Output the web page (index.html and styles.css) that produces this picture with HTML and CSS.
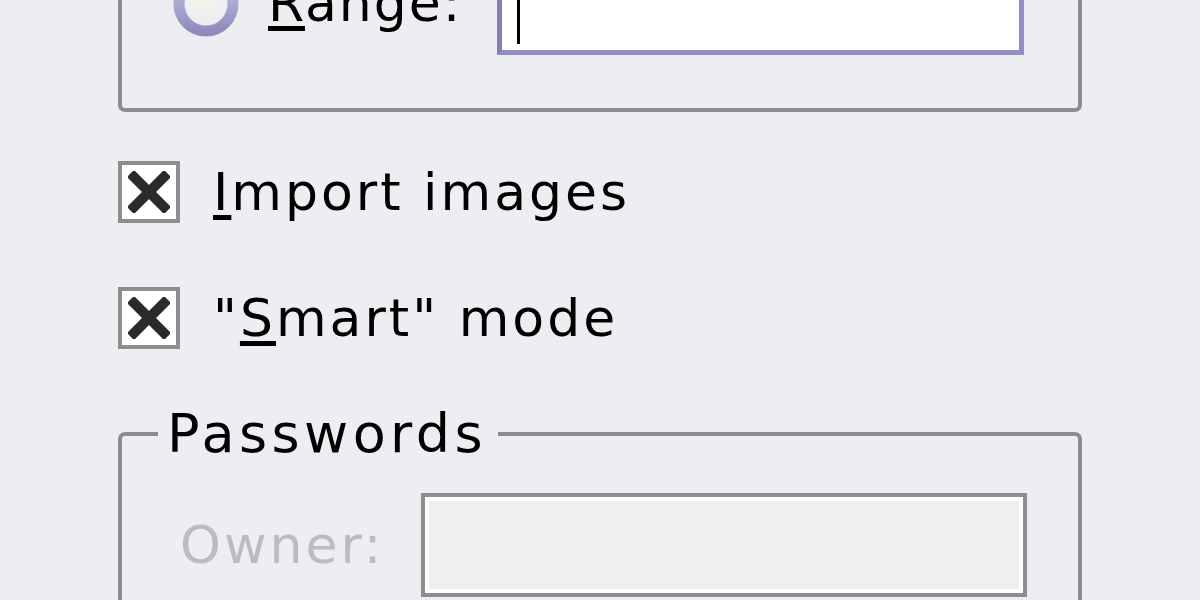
FILE: index.html
```html
<!DOCTYPE html>
<html>
<head>
<meta charset="utf-8">
<link rel="stylesheet" href="styles.css">
</head>
<body>
<div class="page">
  <div class="frame top-frame">
    <div class="range-row">
      <span class="radio">
        <svg width="66" height="66" viewBox="0 0 66 66">
          <defs>
            <linearGradient id="rg" x1="0" y1="0" x2="0" y2="1">
              <stop offset="0" stop-color="#c9c7e4"/>
              <stop offset="1" stop-color="#8f8bbd"/>
            </linearGradient>
            <radialGradient id="rf" cx="0.45" cy="0.35" r="0.6">
              <stop offset="0" stop-color="#f3f8e6"/>
              <stop offset="1" stop-color="#eceaf6"/>
            </radialGradient>
          </defs>
          <circle cx="33" cy="33" r="27" fill="url(#rf)" stroke="url(#rg)" stroke-width="11"/>
        </svg>
      </span>
      <span class="label"><u>R</u>ange:</span>
      <div class="entry focused"><span class="cursor"></span></div>
    </div>
  </div>

  <div class="check-row first">
    <span class="checkbox">
      <svg width="42" height="42" viewBox="0 0 42 42">
        <path d="M6 6 L36 36 M36 6 L6 36" stroke="#2a2a2a" stroke-width="10" stroke-linecap="square"/>
      </svg>
    </span>
    <span class="label"><u>I</u>mport images</span>
  </div>

  <div class="check-row">
    <span class="checkbox">
      <svg width="42" height="42" viewBox="0 0 42 42">
        <path d="M6 6 L36 36 M36 6 L6 36" stroke="#2a2a2a" stroke-width="10" stroke-linecap="square"/>
      </svg>
    </span>
    <span class="label">"<u>S</u>mart" mode</span>
  </div>

  <fieldset class="frame pw">
    <legend class="label">Passwords</legend>
    <div class="owner-row">
      <span class="label disabled">Owner:</span>
      <div class="entry disabled"></div>
    </div>
  </fieldset>
</div>
</body>
</html>
```

FILE: styles.css
```css
html, body {
  margin: 0;
  padding: 0;
  background: #edeef2;
  overflow: hidden;
  height: 600px;
}

.page {
  width: 964px;
  margin-left: 118px;
  font-family: "DejaVu Sans", "Liberation Sans", sans-serif;
  font-size: 52px;
  color: #000;
}

.label {
  white-space: nowrap;
  line-height: normal;
  letter-spacing: 3px;
}

.label u {
  text-decoration-thickness: 5px;
  text-underline-offset: 5px;
}

.frame {
  border: 4px solid #8c8c8e;
  border-radius: 7px;
  box-sizing: border-box;
}

.top-frame {
  margin-top: -118px;
  padding: 65px 54px 53px 51px;
}

.range-row {
  display: flex;
  align-items: center;
  height: 104px;
}

.radio {
  display: flex;
  width: 66px;
  height: 66px;
  margin-top: 2px;
}

.range-row .label {
  margin-left: 29px;
  letter-spacing: 2px;
}

.entry {
  box-sizing: border-box;
  height: 104px;
  margin-left: auto;
  position: relative;
}

.entry.focused {
  width: 527px;
  border: 5px solid #928ec3;
  border-left-color: #837fb5;
  border-top-color: #837fb5;
  background: #fff;
}

.cursor {
  position: absolute;
  left: 15px;
  top: 28px;
  width: 3px;
  height: 60px;
  background: #000;
}

.check-row {
  display: flex;
  align-items: center;
  margin-top: 64px;
}

.check-row.first {
  margin-top: 49px;
}

.checkbox {
  box-sizing: border-box;
  width: 62px;
  height: 62px;
  border: 4px solid #8e8e8e;
  background: #fff;
  display: flex;
  align-items: center;
  justify-content: center;
  flex: none;
}

.check-row .label {
  margin-left: 33px;
}

.pw {
  margin: 53px 0 0 0;
  padding: 0;
  min-inline-size: 0;
}

.pw legend {
  margin-left: 36px;
  padding: 0 11px 0 9px;
  font-size: 54px;
  letter-spacing: 4.4px;
}

.owner-row {
  display: flex;
  align-items: center;
  padding: 28px 51px 40px 58px;
}

.disabled.label {
  color: #bcbcbe;
}

.entry.disabled {
  width: 606px;
  border: 4px solid #8e8e8e;
  box-shadow: inset 0 0 0 4px #ffffff;
  background: #efeff0;
}
```
